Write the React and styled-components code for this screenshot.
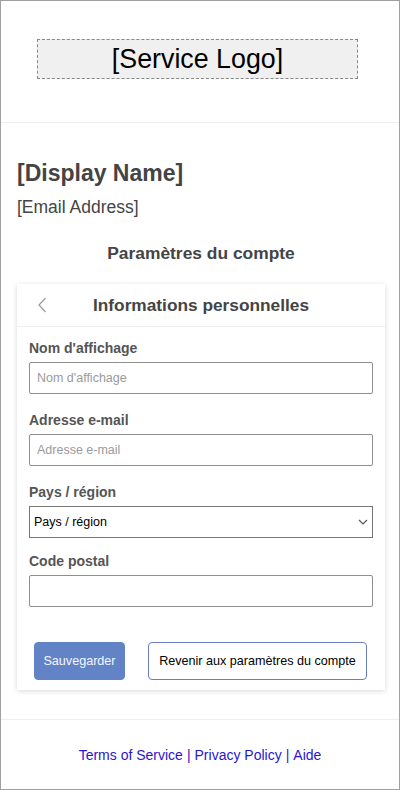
import React from 'react';
import styled, { createGlobalStyle } from 'styled-components';

const GlobalStyle = createGlobalStyle`
    html, body {
        margin: 0;
        padding: 0;
        background: #fff;
    }
    body {
        font-family: "Liberation Sans", Arial, sans-serif;
    }
`;

const Page = styled.div`
    width: 400px;
    height: 790px;
    box-sizing: border-box;
    border: 1px solid #a0a0a0;
    display: flex;
    flex-direction: column;
    color: #444;
`;

const Header = styled.header`
    height: 122px;
    box-sizing: border-box;
    padding-top: 38px;
    border-bottom: 1px solid #eeeeee;
`;

const LogoBox = styled.div`
    width: 321px;
    height: 40px;
    box-sizing: border-box;
    margin-left: 36px;
    border: 1px dashed #888;
    background: #f0f0f0;
    display: flex;
    align-items: center;
    justify-content: center;
    font-size: 26.8px;
    color: #000;
`;

const Main = styled.main`
    flex: 1;
    padding: 37px 14px 0 16px;
`;

const DisplayName = styled.h1`
    margin: 0;
    font-size: 23px;
    line-height: 27px;
    font-weight: bold;
    color: #444;
`;

const Email = styled.div`
    margin-top: 10px;
    font-size: 17.5px;
    line-height: 20px;
`;

const SectionTitle = styled.h2`
    margin: 26px 0 0;
    text-align: center;
    font-size: 17.4px;
    line-height: 20px;
    font-weight: bold;
`;

const Card = styled.section`
    margin-top: 21px;
    background: #fff;
    box-shadow: 0 1px 5px rgba(0, 0, 0, 0.16);
`;

const CardHeader = styled.div`
    height: 43px;
    box-sizing: border-box;
    border-bottom: 1px solid #eeeeee;
    display: grid;
    grid-template-columns: 1fr auto 1fr;
    align-items: center;
`;

const BackButton = styled.button`
    justify-self: start;
    margin-left: 20px;
    padding: 0;
    border: none;
    background: none;
    display: flex;
    cursor: pointer;
`;

const CardTitle = styled.h3`
    margin: 0;
    font-size: 17.3px;
    line-height: 20px;
    font-weight: bold;
`;

const Form = styled.form`
    padding: 13px 12px 10px;
    display: flex;
    flex-direction: column;
`;

const Field = styled.div`
    display: flex;
    flex-direction: column;
    margin-bottom: ${p => p.$gap}px;
`;

const Label = styled.label`
    font-size: 14px;
    line-height: 16px;
    font-weight: bold;
    color: #555;
    margin-bottom: 6px;
`;

const Input = styled.input`
    height: 32px;
    box-sizing: border-box;
    border: 1px solid #8f8f8f;
    border-radius: 2px;
    padding: 0 7px;
    font-family: "Liberation Sans", Arial, sans-serif;
    font-size: 12.5px;
    color: #222;
    &::placeholder {
        color: #9a9a9a;
    }
`;

const SelectWrap = styled.div`
    position: relative;
    display: flex;
`;

const Select = styled.select`
    flex: 1;
    height: 32px;
    box-sizing: border-box;
    appearance: none;
    border: 1px solid #767676;
    border-radius: 0;
    background: #fff;
    padding: 0 4px;
    font-family: "Liberation Sans", Arial, sans-serif;
    font-size: 12.5px;
    color: #000;
`;

const SelectArrow = styled.svg`
    position: absolute;
    right: 5px;
    top: 13px;
    pointer-events: none;
`;

const Actions = styled.div`
    display: flex;
    justify-content: space-between;
    padding: 0 6px 0 5px;
`;

const Button = styled.button`
    height: 38px;
    box-sizing: border-box;
    border-radius: 4px;
    font-family: "Liberation Sans", Arial, sans-serif;
    font-size: 12.6px;
    white-space: nowrap;
    padding: 0;
    cursor: pointer;
    border: 1px solid ${p => (p.$primary ? '#6383c7' : '#6a7fc2')};
    background: ${p => (p.$primary ? '#6383c7' : '#fff')};
    color: ${p => (p.$primary ? '#f4f6ff' : '#000')};
    width: ${p => p.$width}px;
`;

const Footer = styled.footer`
    margin-top: 28px;
    border-top: 1px solid #eeeeee;
    height: 70px;
    display: flex;
    justify-content: center;
    padding-top: 27px;
    box-sizing: border-box;
    font-size: 14px;
    line-height: 16px;
    color: #3a14c0;
`;

const Link = styled.a`
    color: #2a14d0;
    text-decoration: none;
`;

const Sep = styled.span`
    margin: 0 4px;
`;

const fields = [
    { id: 'name', label: "Nom d'affichage", placeholder: "Nom d'affichage" },
    { id: 'email', label: 'Adresse e-mail', placeholder: 'Adresse e-mail' },
];

export default function App() {
    return (
        <>
            <GlobalStyle />
            <Page>
                <Header>
                    <LogoBox>[Service Logo]</LogoBox>
                </Header>
                <Main>
                    <DisplayName>[Display Name]</DisplayName>
                    <Email>[Email Address]</Email>
                    <SectionTitle>Paramètres du compte</SectionTitle>
                    <Card>
                        <CardHeader>
                            <BackButton type="button" aria-label="Retour">
                                <svg width="10" height="16" viewBox="0 0 10 16">
                                    <path d="M8.5 1 L2 8 L8.5 15" fill="none" stroke="#9a9a9a" strokeWidth="1.2" />
                                </svg>
                            </BackButton>
                            <CardTitle>Informations personnelles</CardTitle>
                            <span />
                        </CardHeader>
                        <Form onSubmit={e => e.preventDefault()}>
                            {fields.map(f => (
                                <Field key={f.id} $gap={18}>
                                    <Label htmlFor={f.id}>{f.label}</Label>
                                    <Input id={f.id} placeholder={f.placeholder} />
                                </Field>
                            ))}
                            <Field $gap={15}>
                                <Label htmlFor="country">Pays / région</Label>
                                <SelectWrap>
                                    <Select id="country" defaultValue="">
                                        <option value="">Pays / région</option>
                                    </Select>
                                    <SelectArrow width="10" height="6" viewBox="0 0 10 6">
                                        <path d="M1 1 L5 5 L9 1" fill="none" stroke="#555" strokeWidth="1.2" />
                                    </SelectArrow>
                                </SelectWrap>
                            </Field>
                            <Field $gap={35}>
                                <Label htmlFor="zip">Code postal</Label>
                                <Input id="zip" />
                            </Field>
                            <Actions>
                                <Button type="submit" $primary $width={91}>Sauvegarder</Button>
                                <Button type="button" $width={219}>Revenir aux paramètres du compte</Button>
                            </Actions>
                        </Form>
                    </Card>
                </Main>
                <Footer>
                    <Link href="#">Terms of Service</Link>
                    <Sep>|</Sep>
                    <Link href="#">Privacy Policy</Link>
                    <Sep>|</Sep>
                    <Link href="#">Aide</Link>
                </Footer>
            </Page>
        </>
    );
}
